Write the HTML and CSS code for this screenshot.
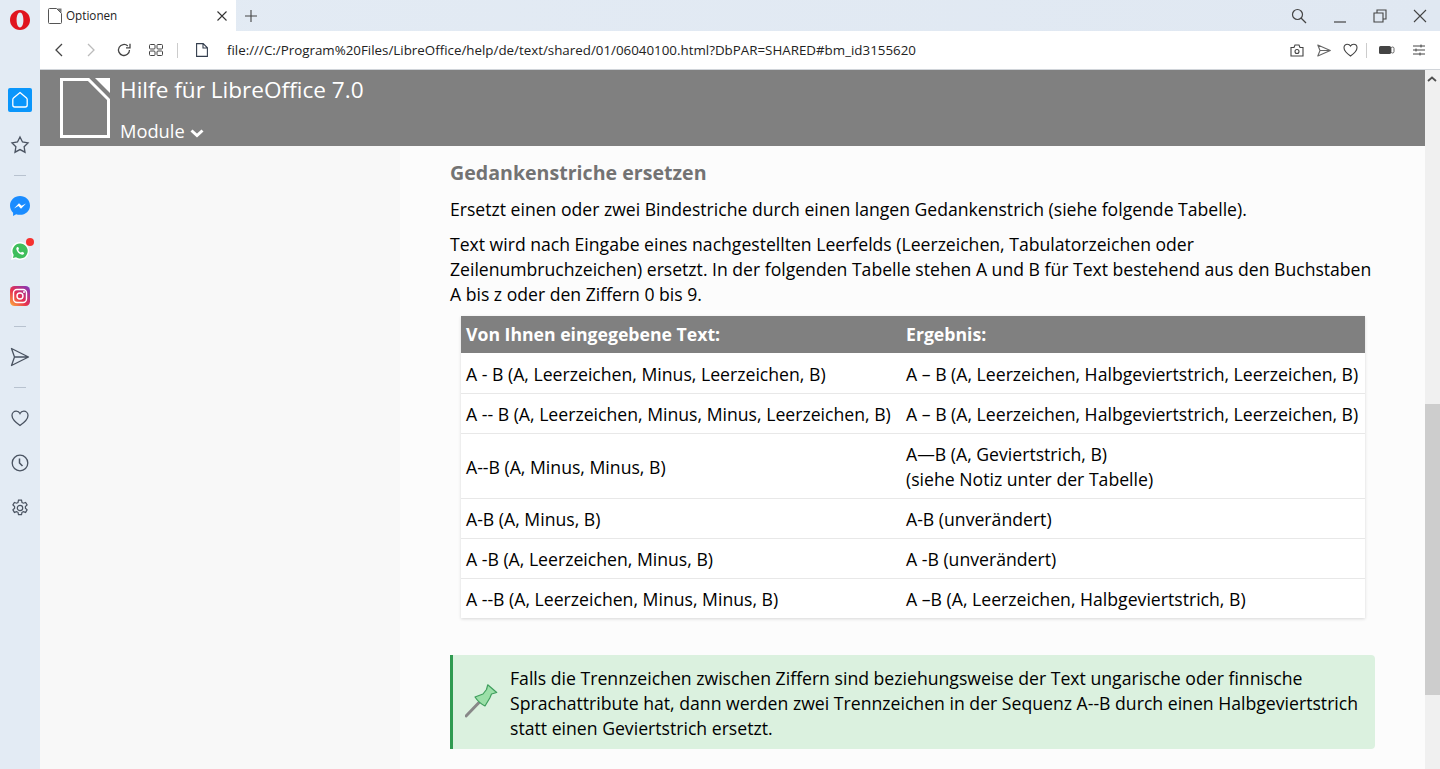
FILE: index.html
```html
<!DOCTYPE html>
<html lang="de">
<head>
<meta charset="utf-8">
<title>Optionen</title>
<link rel="stylesheet" href="styles.css">
</head>
<body>
<div class="app">
  <aside class="sidebar">
    <svg class="opera" viewBox="0 0 20 20" width="20" height="20"><path fill="#e0141e" fill-rule="evenodd" d="M10 0C4.400 0 0 4.400 0 10s4.400 10 10 10 10-4.400 10-10S15.600 0 10 0zm0 2.600c2.100 0 3.400 3.300 3.400 7.400s-1.300 7.400-3.400 7.400S6.600 14.100 6.600 10 7.900 2.600 10 2.600z"/></svg>
    <div class="side-home"><svg viewBox="0 0 24 24" width="24" height="24" fill="none" stroke="#fff" stroke-width="1.300"><path d="M12 4.500l6.500 5.500q.7.600.7 1.500v5.500q0 2-2 2H6.800q-2 0-2-2v-5.500q0-.9.700-1.500z"/></svg></div>
    <svg class="side-icon side-star" viewBox="0 0 20 20" width="20" height="20" fill="none" stroke="#4a5361" stroke-width="1.300"><path d="M10 2l2.500 5 5.500.9-3.900 3.800.9 5.500-5-2.600-5 2.600.9-5.500L2 7.900 7.500 7z"/></svg>
    <div class="side-sep"></div>
    <svg class="side-app" viewBox="0 0 20 20" width="20" height="20"><path fill="#1a8cff" d="M10 0C4.400 0 0 4.100 0 9.600c0 2.900 1.200 5.400 3.100 7.100v3.200l3-1.700c1.200.4 2.500.6 3.900.6 5.600 0 10-4.100 10-9.400C20 4.100 15.600 0 10 0z"/><path fill="#fff" d="M4 12.500l5-5.300 2.600 2.600 4.400-2.400-5 5.300-2.600-2.600z"/></svg>
    <div class="side-badged">
      <svg viewBox="0 0 20 20" width="20" height="20"><path fill="#fff" d="M10 1a9 9 0 0 0-7.700 13.600L1 19l4.500-1.200A9 9 0 1 0 10 1z"/><path fill="#3fbe5c" d="M10 2.500a7.500 7.500 0 0 0-6.300 11.500l-.8 3 3.100-.8A7.500 7.500 0 1 0 10 2.500z"/><path fill="#fff" d="M7.300 6c-.8.500-1.200 1.500-.8 2.800.7 2.300 2.400 4 4.700 4.800 1.300.4 2.300 0 2.800-.8.300-.5.100-1-.3-1.200l-1.300-.7c-.4-.2-.7 0-1 .4-.2.300-.5.300-.8.200-.9-.4-1.700-1.200-2.200-2.100-.2-.3-.1-.6.200-.8.400-.3.500-.6.300-1l-.6-1.300C8 5.800 7.700 5.800 7.300 6z"/></svg>
      <span class="badge"></span>
    </div>
    <svg class="side-insta" viewBox="0 0 20 20" width="20" height="20"><defs><linearGradient id="ig" x1="0" y1="1" x2="1" y2="0"><stop offset="0" stop-color="#fdb03c"/><stop offset=".45" stop-color="#e7304f"/><stop offset="1" stop-color="#7a37c4"/></linearGradient></defs><rect width="20" height="20" rx="4.500" fill="url(#ig)"/><rect x="3.500" y="3.500" width="13" height="13" rx="3.500" fill="none" stroke="#fff" stroke-width="1.400"/><circle cx="10" cy="10" r="3" fill="none" stroke="#fff" stroke-width="1.400"/><circle cx="14" cy="6" r="1" fill="#fff"/></svg>
    <div class="side-sep"></div>
    <svg class="side-send" viewBox="0 0 20 20" width="20" height="20" fill="none" stroke="#4a5361" stroke-width="1.300" stroke-linejoin="round"><path d="M1.500 1.500L18.500 10 1.500 18.500 4.500 10zM4.500 10h14"/></svg>
    <div class="side-sep"></div>
    <svg class="side-send" viewBox="0 0 20 20" width="20" height="20" fill="none" stroke="#4a5361" stroke-width="1.300"><path d="M10 17.500C5 14 2 11.300 2 7.500 2 5 4 3.200 6.200 3.200c1.600 0 3 .8 3.800 2.300.8-1.500 2.200-2.300 3.800-2.300C16 3.200 18 5 18 7.500c0 3.800-3 6.500-8 10z"/></svg>
    <svg class="side-icon" viewBox="0 0 20 20" width="20" height="20" fill="none" stroke="#4a5361" stroke-width="1.300"><circle cx="10" cy="10" r="7.800"/><path d="M9.500 5.500V10l3 3" stroke-width="1.500"/></svg>
    <svg class="side-icon" viewBox="0 0 20 20" width="20" height="20" fill="none" stroke="#4a5361" stroke-width="1.200"><circle cx="10" cy="10" r="2.700"/><path d="M8.500 2.200h3l.5 2.300 1.400.7 2.200-.8 1.500 2.600-1.700 1.600v1.600l1.700 1.600-1.500 2.600-2.200-.8-1.400.7-.5 2.300h-3l-.5-2.300-1.400-.7-2.200.8-1.500-2.600 1.700-1.600V8.600L2.900 7l1.500-2.600 2.200.8 1.400-.7z"/></svg>
  </aside>
  <div class="browser">
    <div class="tabstrip">
      <div class="tab">
        <svg viewBox="0 0 14 16" width="14" height="16" fill="none"><path d="M.5 1.500q0-1 1-1h7l5 5v9q0 1-1 1h-11q-1 0-1-1z" stroke="#555"/><path d="M9 .5h4.500V5z" fill="#777"/></svg>
        <span class="tab-title">Optionen</span>
        <svg class="tab-close" viewBox="0 0 12 12" width="12" height="12" stroke="#333" stroke-width="1.100"><path d="M1.500 1.500l9 9M10.500 1.500l-9 9"/></svg>
      </div>
      <svg class="tab-new" viewBox="0 0 12 12" width="12" height="12" stroke="#444" stroke-width="1.100"><path d="M6 0v12M0 6h12"/></svg>
      <div class="win-controls">
        <svg viewBox="0 0 16 16" width="16" height="16" fill="none" stroke="#444" stroke-width="1.200"><circle cx="6.500" cy="6.500" r="5"/><path d="M10 10l5 5"/></svg>
        <svg viewBox="0 0 14 14" width="14" height="14" stroke="#444" stroke-width="1.200"><path d="M1 13h12"/></svg>
        <svg viewBox="0 0 14 14" width="14" height="14" fill="none" stroke="#444" stroke-width="1.100"><path d="M1 4h9v9H1zM4 4V1h9v9h-3"/></svg>
        <svg viewBox="0 0 14 14" width="14" height="14" stroke="#444" stroke-width="1.100"><path d="M1 1l12 12M13 1L1 13"/></svg>
      </div>
    </div>
    <div class="toolbar">
      <svg viewBox="0 0 12 14" width="12" height="14" fill="none" stroke="#444" stroke-width="1.300"><path d="M9 1L3 7l6 6"/></svg>
      <svg class="tool-fwd" viewBox="0 0 12 14" width="12" height="14" fill="none" stroke="#bbb" stroke-width="1.300"><path d="M3 1l6 6-6 6"/></svg>
      <svg class="tool-reload" viewBox="0 0 14 14" width="14" height="14" fill="none" stroke="#444" stroke-width="1.300"><path d="M12.500 7A5.500 5.500 0 1 1 10.800 3"/><path d="M13 .8v4H9"/></svg>
      <svg class="tool-grid" viewBox="0 0 14 12" width="14" height="12" fill="none" stroke="#444"><rect x=".5" y=".5" width="5.500" height="4.500" rx="1"/><rect x="8" y=".5" width="5.500" height="4.500" rx="1"/><rect x=".5" y="7" width="5.500" height="4.500" rx="1"/><rect x="8" y="7" width="5.500" height="4.500" rx="1"/></svg>
      <span class="tool-sep"></span>
      <svg class="tool-file" viewBox="0 0 12 14" width="12" height="14" fill="none" stroke="#333d4d" stroke-width="1.100"><path d="M.6.6h6.600l4.200 4.200v8.600H.6zM7 .6v4.400h4.400"/></svg>
      <span class="url">file:///C:/Program%20Files/LibreOffice/help/de/text/shared/01/06040100.html?DbPAR=SHARED#bm_id3155620</span>
      <div class="tool-right">
        <svg viewBox="0 0 14 13" width="14" height="13" fill="none" stroke="#444" stroke-width="1.100"><path d="M1 3.500h3l1-2.500h4l1 2.500h3v8.500H1z"/><circle cx="7" cy="7.500" r="2"/></svg>
        <svg class="tr-send" viewBox="0 0 14 13" width="14" height="13" fill="none" stroke="#666" stroke-width="1.100" stroke-linejoin="round"><path d="M.8 1L13.300 6.500.8 12 3 6.500zM3 6.500h10"/></svg>
        <svg class="tr-heart" viewBox="0 0 15 14" width="15" height="14" fill="none" stroke="#444" stroke-width="1.100"><path d="M7.500 13C3.200 10 1 7.800 1 4.800 1 2.700 2.600 1.200 4.300 1.200c1.400 0 2.500.6 3.200 1.900.7-1.300 1.800-1.900 3.200-1.900C12.400 1.200 14 2.700 14 4.800c0 3-2.200 5.200-6.500 8.200z"/></svg>
        <span class="tool-sep"></span>
        <svg class="tr-batt" viewBox="0 0 16 8" width="16" height="8"><rect width="12" height="8" rx="1.500" fill="#444"/><rect x="12" y="1" width="3" height="6" rx="1.500" fill="none" stroke="#444" stroke-width=".8"/></svg>
        <svg class="tr-sliders" viewBox="0 0 12 12" width="12" height="12" stroke="#444"><path d="M0 2h12M0 6h12M0 10h12"/><path d="M8 .5v3M3 4.500v3M7 8.500v3"/></svg>
      </div>
    </div>
    <div class="viewport">
      <div class="page">
        <header class="help-header">
          <svg class="lo-logo" viewBox="0 0 50 60" width="50" height="60" fill="none"><path d="M1.500 1.500h27l20 20v37H1.500z" stroke="#fff" stroke-width="3"/><path d="M35 0h15v15z" fill="#fff"/></svg>
          <div class="help-titles">
            <div class="help-title">Hilfe für LibreOffice 7.0</div>
            <div class="help-module">Module <svg viewBox="0 0 14 9" width="14" height="9" fill="none" stroke="#fff" stroke-width="3"><path d="M1.500 1.500L7 6.500l5.500-5"/></svg></div>
          </div>
        </header>
        <div class="page-body">
          <div class="leftcol"></div>
          <main class="content">
            <h2>Gedankenstriche ersetzen</h2>
            <p>Ersetzt einen oder zwei Bindestriche durch einen langen Gedankenstrich (siehe folgende Tabelle).</p>
            <p>Text wird nach Eingabe eines nachgestellten Leerfelds (Leerzeichen, Tabulatorzeichen oder Zeilenumbruchzeichen) ersetzt. In der folgenden Tabelle stehen A und B für Text bestehend aus den Buchstaben A bis z oder den Ziffern 0 bis 9.</p>
            <div class="table">
              <div class="row head"><div class="c1">Von Ihnen eingegebene Text:</div><div class="c2">Ergebnis:</div></div>
              <div class="row first"><div class="c1">A - B (A, Leerzeichen, Minus, Leerzeichen, B)</div><div class="c2">A – B (A, Leerzeichen, Halbgeviertstrich, Leerzeichen, B)</div></div>
              <div class="row"><div class="c1">A -- B (A, Leerzeichen, Minus, Minus, Leerzeichen, B)</div><div class="c2">A – B (A, Leerzeichen, Halbgeviertstrich, Leerzeichen, B)</div></div>
              <div class="row tall"><div class="c1">A--B (A, Minus, Minus, B)</div><div class="c2">A—B (A, Geviertstrich, B)<br>(siehe Notiz unter der Tabelle)</div></div>
              <div class="row"><div class="c1">A-B (A, Minus, B)</div><div class="c2">A-B (unverändert)</div></div>
              <div class="row"><div class="c1">A -B (A, Leerzeichen, Minus, B)</div><div class="c2">A -B (unverändert)</div></div>
              <div class="row last"><div class="c1">A --B (A, Leerzeichen, Minus, Minus, B)</div><div class="c2">A –B (A, Leerzeichen, Halbgeviertstrich, B)</div></div>
            </div>
            <div class="note">
              <svg viewBox="0 0 34 34" width="34" height="34"><path d="M1 32L14 18.500" stroke="#888" stroke-width="3" stroke-linecap="round"/><path d="M22.700.8L31.700 8.500 26.500 10 24.800 14 20 22Q14 19 10 13L18 10 21.500 5.500z" fill="#9be0a8" stroke="#3f9e5d" stroke-width="1.200" stroke-linejoin="round"/></svg>
              <p>Falls die Trennzeichen zwischen Ziffern sind beziehungsweise der Text ungarische oder finnische Sprachattribute hat, dann werden zwei Trennzeichen in der Sequenz A--B durch einen Halbgeviertstrich statt einen Geviertstrich ersetzt.</p>
            </div>
          </main>
        </div>
      </div>
      <div class="scrollbar">
        <svg class="sb-up" viewBox="0 0 10 6" width="10" height="6" fill="none" stroke="#505050" stroke-width="1.800"><path d="M1 5l4-3.500L9 5"/></svg>
        <div class="sb-thumb"></div>
      </div>
    </div>
  </div>
</div>
</body>
</html>
```
FILE: styles.css
```css
* { box-sizing: border-box; }
html, body { margin: 0; height: 100%; overflow: hidden; }
body { font-family: "Open Sans", "Noto Sans", sans-serif; color: #000; }
.app { display: flex; width: 1440px; height: 769px; }
.sidebar { width: 40px; flex: none; background: #e3ebf4; display: flex; flex-direction: column; align-items: center; padding-top: 10px; }
.sidebar svg { flex: none; }
.opera { display: block; }
.side-home { width: 24px; height: 24px; margin-top: 58px; background: #0a96fb; border-radius: 2px; }
.side-home svg { display: block; }
.side-icon { display: block; margin-top: 25px; }
.side-star { margin-top: 23px; }
.side-sep { width: 12px; height: 1px; background: #b8c2cf; margin-top: 20px; }
.side-app, .side-send { display: block; margin-top: 20px; }
.side-insta { display: block; margin-top: 25px; }
.side-badged { position: relative; margin-top: 25px; height: 20px; }
.side-badged svg { display: block; }
.badge { position: absolute; top: -3px; right: -4px; width: 8px; height: 8px; border-radius: 50%; background: #f5312f; }
.browser { flex: 1; min-width: 0; display: flex; flex-direction: column; }
.tabstrip { height: 31px; flex: none; background: linear-gradient(90deg, #e3ebf4, #e0e8f2); display: flex; align-items: center; }
.tab { width: 196px; height: 31px; background: #fff; display: flex; align-items: center; padding-left: 8px; }
.tab-title { font-size: 11.7px; line-height: 14px; margin: -2px 0 0 4px; color: #222; }
.tab-close { margin-left: auto; margin-right: 8px; }
.tab-new { margin-left: 9px; }
.win-controls { margin-left: auto; display: flex; align-items: center; gap: 26px; padding-right: 13px; }
.toolbar { height: 39px; flex: none; background: #fff; display: flex; align-items: center; padding-left: 13px; border-bottom: 1px solid #d0d4d9; }
.tool-fwd { margin-left: 20px; }
.tool-reload { margin-left: 20px; }
.tool-grid { margin-left: 18px; }
.tool-sep { width: 1px; height: 15px; background: #ccc; margin-left: 14px; }
.tool-file { margin-left: 18px; }
.url { font-size: 13.35px; margin-left: 19px; color: #222; white-space: nowrap; }
.tool-right { margin-left: auto; display: flex; align-items: center; padding-right: 15px; }
.tr-send { margin-left: 13px; }
.tr-heart { margin-left: 12px; }
.tool-right .tool-sep { margin-left: 8px; }
.tr-batt { margin-left: 12px; }
.tr-sliders { margin-left: 18px; }
.viewport { flex: 1; min-height: 0; display: flex; }
.page { flex: 1; min-width: 0; display: flex; flex-direction: column; background: #f8f8f8; }
.help-header { height: 76px; flex: none; background: #808080; display: flex; padding: 8px 0 0 20px; color: #fff; }
.lo-logo { display: block; flex: none; }
.help-titles { margin: -2px 0 0 10px; }
.help-title { font-size: 22.6px; line-height: 28px; }
.help-module { font-size: 18.3px; line-height: 24px; margin-top: 15px; display: flex; align-items: center; gap: 5px; }
.help-module svg { margin-top: 4px; }
.page-body { flex: 1; display: flex; min-height: 0; }
.leftcol { width: 360px; flex: none; }
.content { flex: 1; background: #fcfcfc; padding: 14px 50px 0 50px; }
h2 { font-size: 19.6px; line-height: 25px; font-weight: 700; color: #737373; margin: 0 0 12px; }
.content > p { font-size: 17.6px; line-height: 25px; margin: 0 0 10px; }
.table { margin: -1px 10px 0 11px; box-shadow: 0 1px 3px rgba(0,0,0,.15); background: #fff; font-size: 17.65px; line-height: 25px; }
.row { display: flex; align-items: center; height: 40px; border-bottom: 1px solid #e8e8e8; padding: 2px 0 0 5px; }
.row.first { height: 41px; }
.row.last { height: 39px; border-bottom: 0; }
.row.head { height: 37px; padding-top: 0; background: #808080; color: #fff; font-weight: 700; border: 0; }
.row.tall { height: 65px; }
.c1 { width: 440px; flex: none; white-space: nowrap; }
.c2 { flex: 1; white-space: nowrap; }
.note { display: flex; align-items: center; margin-top: 37px; height: 94px; background: #dbf1df; border-left: 3px solid #2f9a50; border-radius: 0 4px 4px 0; padding-left: 12px; }
.note svg { flex: none; margin-top: -2px; }
.note p { font-size: 17.65px; line-height: 25px; margin: 2px 0 0 11px; }
.scrollbar { width: 15px; flex: none; background: #f0f0f0; position: relative; }
.sb-up { position: absolute; top: 6px; left: 2px; }
.sb-thumb { position: absolute; top: 334px; left: 0; width: 15px; height: 291px; background: #cdcdcd; }
```
